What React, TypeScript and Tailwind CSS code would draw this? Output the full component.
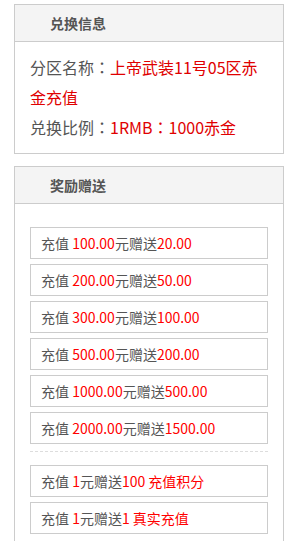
import React from "react";

const font = { fontFamily: '"Noto Sans CJK SC", "Noto Sans", sans-serif' };

const R = ({ children }: { children: React.ReactNode }) => (
  <span className="text-[#ff0000]">{children}</span>
);

const Colon = () => (
  <span className="font-['Noto_Sans_CJK_TC',sans-serif]">：</span>
);

const items: { parts: [string, boolean][] }[] = [
  { parts: [["充值 ", false], ["100.00", true], ["元赠送", false], ["20.00", true]] },
  { parts: [["充值 ", false], ["200.00", true], ["元赠送", false], ["50.00", true]] },
  { parts: [["充值 ", false], ["300.00", true], ["元赠送", false], ["100.00", true]] },
  { parts: [["充值 ", false], ["500.00", true], ["元赠送", false], ["200.00", true]] },
  { parts: [["充值 ", false], ["1000.00", true], ["元赠送", false], ["500.00", true]] },
  { parts: [["充值 ", false], ["2000.00", true], ["元赠送", false], ["1500.00", true]] },
];

const extra: { parts: [string, boolean][] }[] = [
  { parts: [["充值 ", false], ["1", true], ["元赠送", false], ["100 充值积分", true]] },
  { parts: [["充值 ", false], ["1", true], ["元赠送", false], ["1 真实充值", true]] },
];

function Item({ parts }: { parts: [string, boolean][] }) {
  return (
    <div className="h-[32px] border border-[#cccccc] pl-[10px] text-[14px] leading-[30px] text-[#555555] whitespace-pre">
      {parts.map(([t, red], i) =>
        red ? <R key={i}>{t}</R> : <span key={i}>{t}</span>
      )}
    </div>
  );
}

function Header({ title }: { title: string }) {
  return (
    <div className="h-[37px] bg-[#f4f4f4] border-b border-[#cccccc] pl-[35px] text-[14px] font-bold leading-[36px] text-[#555555]">
      {title}
    </div>
  );
}

export default function App() {
  return (
    <div className="w-[304px] h-[541px] overflow-hidden bg-white" style={font}>
      <div className="ml-[14px] w-[270px] pt-[4px]">
        <div className="border border-[#cccccc]">
          <Header title="兑换信息" />
          <div className="pt-[10px] pb-[11px] pl-[15px] pr-[15px] text-[16px] leading-[30px] text-[#555555]">
            <p>
              分区名称<Colon />
              <span className="text-[#e00000]">上帝武装11号05区赤金充值</span>
            </p>
            <p>
              兑换比例<Colon />
              <span className="text-[#e00000]">
                1RMB<Colon />1000赤金
              </span>
            </p>
          </div>
        </div>
        <div className="mt-[12px] border border-[#cccccc]">
          <Header title="奖励赠送" />
          <div className="pt-[23px] pb-[15px] px-[15px]">
            <div className="flex flex-col gap-[5px]">
              {items.map((it, i) => (
                <Item key={i} parts={it.parts} />
              ))}
            </div>
            <div className="mt-[7px] mb-[13px] border-t border-dashed border-[#dddddd]" />
            <div className="flex flex-col gap-[5px]">
              {extra.map((it, i) => (
                <Item key={i} parts={it.parts} />
              ))}
            </div>
          </div>
        </div>
      </div>
    </div>
  );
}
